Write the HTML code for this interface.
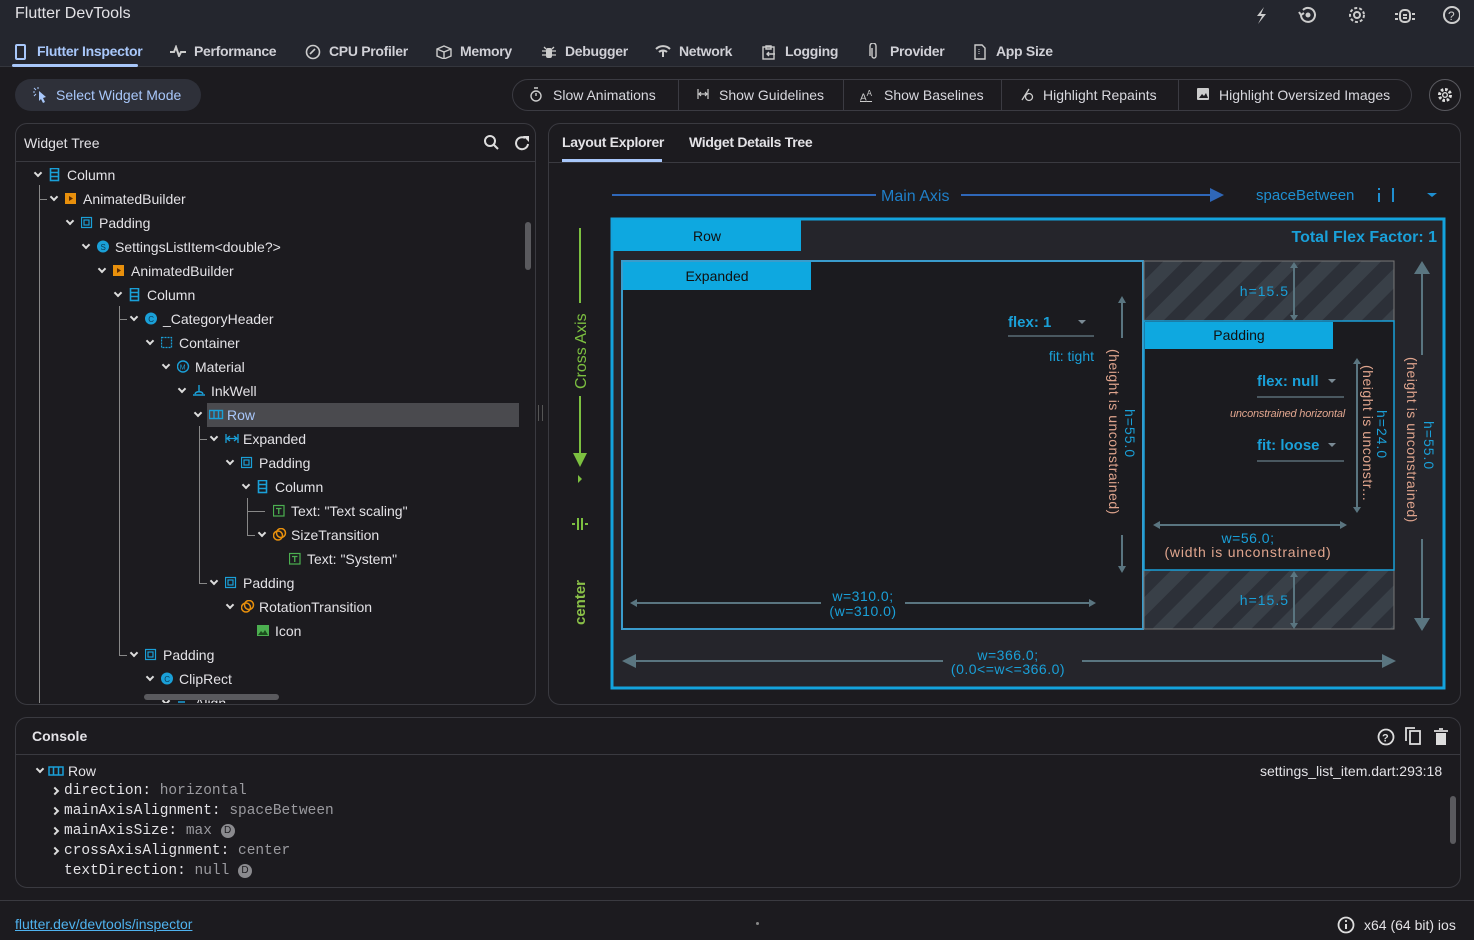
<!DOCTYPE html>
<html><head><meta charset="utf-8">
<style>
*{box-sizing:border-box;margin:0;padding:0}
body{width:1474px;height:940px;background:#1c1b1f;font-family:"Liberation Sans",sans-serif;color:#e3e2e6;position:relative;overflow:hidden;font-size:14px}
.a{position:absolute;white-space:nowrap}
.hdr{left:0;top:0;width:1474px;height:67px;background:#24262e;border-bottom:1px solid #34363d}
.tab{top:43px;font-size:14px;font-weight:bold;color:#d0d0d6;letter-spacing:-0.3px}
.btn{top:79px;height:32px;border:1px solid #3b3b42;border-radius:16px}
.tb{top:87px;font-size:14px;color:#d8d8de}
.panel{border:1px solid #3a3a40;border-radius:12px}
.tr{font-size:14px;color:#e3e2e6;height:24px;line-height:24px}
.chev{width:6px;height:6px;border-right:2px solid #ddd;border-bottom:2px solid #ddd;transform:rotate(45deg)}
.vl{width:1px;background:#888}
.mono{font-family:"Liberation Mono",monospace;font-size:14.5px;color:#e3e2e6}
.g{color:#9a9a9f}
.D{display:inline-block;width:14px;height:14px;border-radius:7px;background:#8a8a8e;color:#1c1b1f;font-size:10px;text-align:center;line-height:14px;font-family:"Liberation Sans",sans-serif;vertical-align:1px}
.rc{width:6px;height:6px;border-right:2px solid #ddd;border-bottom:2px solid #ddd;transform:rotate(-45deg)}
</style></head><body>
<div class="a hdr"></div>
<div class="a" style="left:15px;top:5px;font-size:16px;color:#e3e2e6">Flutter DevTools</div>
<svg class="a" style="left:1250px;top:4px" width="210" height="22" viewBox="0 0 210 22" fill="none" stroke="#ccc" stroke-width="2">
<path d="M14 3 L7 12 L12 12 L8 20 L16 10 L11 10 Z" fill="#ccc" stroke="none"/>
<path d="M53 6a7 7 0 1 1 -2 5" /><path d="M49 8l2 3 3-2" /><circle cx="58" cy="11" r="1.5" fill="#ccc"/>
<circle cx="107" cy="11" r="3"/><circle cx="107" cy="11" r="7" stroke-dasharray="3 2"/>
<rect x="150" y="6" width="10" height="12" rx="4"/><path d="M148 10h-3M162 10h3M148 15h-3M162 15h3M153 11h4M153 14h4"/>
<circle cx="202" cy="11" r="8"/><text x="198" y="16" font-size="12" fill="#ccc" stroke="none" font-family="Liberation Sans">?</text>
</svg>
<svg class="a" style="left:15px;top:44px" width="11" height="16"><rect x="1" y="1" width="9" height="14" rx="1" fill="none" stroke="#a8c7fa" stroke-width="2"/></svg>
<div class="a tab" style="left:37px;color:#a8c7fa">Flutter Inspector</div>
<div class="a" style="left:12px;top:64px;width:126px;height:3px;background:#a8c7fa;border-radius:2px"></div>
<svg class="a" style="left:170px;top:45px" width="16" height="12"><path d="M0 7h4l2-5 3 9 2-4h5" fill="none" stroke="#ccc" stroke-width="2"/></svg>
<div class="a tab" style="left:194px">Performance</div>
<svg class="a" style="left:305px;top:44px" width="16" height="16"><circle cx="8" cy="8" r="6.5" fill="none" stroke="#ccc" stroke-width="1.6"/><path d="M5 10l5-5" stroke="#ccc" stroke-width="1.6"/></svg>
<div class="a tab" style="left:329px">CPU Profiler</div>
<svg class="a" style="left:436px;top:45px" width="16" height="14"><path d="M1 4l7-3 7 3v7l-7 3-7-3z M1 4l7 3 7-3 M8 7v7" fill="none" stroke="#ccc" stroke-width="1.4"/></svg>
<div class="a tab" style="left:460px">Memory</div>
<svg class="a" style="left:542px;top:44px" width="14" height="16"><rect x="4" y="4" width="6" height="10" rx="2" fill="#ccc"/><path d="M0 7h14M0 11h14M2 3l2 2M12 3l-2 2" stroke="#ccc" stroke-width="1.3"/></svg>
<div class="a tab" style="left:565px">Debugger</div>
<svg class="a" style="left:655px;top:45px" width="16" height="12"><path d="M1 4a10 10 0 0 1 14 0M4 7a6 6 0 0 1 8 0M8 5v7" fill="none" stroke="#ccc" stroke-width="2"/></svg>
<div class="a tab" style="left:679px">Network</div>
<svg class="a" style="left:762px;top:44px" width="14" height="16"><rect x="1" y="3" width="11" height="12" fill="none" stroke="#ccc" stroke-width="1.4"/><path d="M4 2h5v3H4z M5 10h8M7 8l-2 2 2 2" fill="none" stroke="#ccc" stroke-width="1.4"/></svg>
<div class="a tab" style="left:785px">Logging</div>
<svg class="a" style="left:869px;top:43px" width="10" height="17"><path d="M3 5v8a2 2 0 0 0 4 0V3a3 3 0 0 0-6 0v10" fill="none" stroke="#ccc" stroke-width="1.4"/></svg>
<div class="a tab" style="left:890px">Provider</div>
<svg class="a" style="left:974px;top:44px" width="12" height="16"><path d="M1 1h7l3 3v11H1z" fill="none" stroke="#ccc" stroke-width="1.4"/><path d="M5 5v6" stroke="#ccc" stroke-dasharray="1 1"/></svg>
<div class="a tab" style="left:996px">App Size</div>

<div class="a" style="left:15px;top:79px;width:186px;height:32px;border-radius:16px;background:#2e3039"></div>
<svg class="a" style="left:33px;top:87px" width="14" height="16"><path d="M6 4l7 6-3 1 2 4-2 1-2-4-2 2z" fill="#a8c7fa"/><path d="M1 1l2 2M5 0v2M0 5h2M1 9l2-2" stroke="#a8c7fa"/></svg>
<div class="a" style="left:56px;top:87px;font-size:14px;color:#a8c7fa">Select Widget Mode</div>
<div class="a btn" style="left:512px;width:900px"></div>
<div class="a" style="left:678px;top:80px;width:1px;height:30px;background:#3b3b42"></div>
<div class="a" style="left:843px;top:80px;width:1px;height:30px;background:#3b3b42"></div>
<div class="a" style="left:1001px;top:80px;width:1px;height:30px;background:#3b3b42"></div>
<div class="a" style="left:1178px;top:80px;width:1px;height:30px;background:#3b3b42"></div>
<svg class="a" style="left:530px;top:87px" width="12" height="15"><circle cx="6" cy="9" r="5" fill="none" stroke="#ccc" stroke-width="1.4"/><path d="M4 1h4M6 6v3" stroke="#ccc" stroke-width="1.4"/></svg>
<div class="a tb" style="left:553px">Slow Animations</div>
<svg class="a" style="left:697px;top:89px" width="12" height="10"><path d="M1 0v10M11 0v10M2 5h8M4 3l-2 2 2 2M8 3l2 2-2 2" fill="none" stroke="#ccc" stroke-width="1.2"/></svg>
<div class="a tb" style="left:719px">Show Guidelines</div>
<div class="a" style="left:860px;top:89px;font-size:10px;color:#ccc;text-decoration:underline">A<sup style="font-size:8px">A</sup></div>
<div class="a tb" style="left:884px">Show Baselines</div>
<svg class="a" style="left:1020px;top:87px" width="14" height="15"><circle cx="9" cy="10" r="3.5" fill="none" stroke="#ccc" stroke-width="1.3"/><path d="M2 13l7-11" stroke="#ccc" stroke-width="1.3"/></svg>
<div class="a tb" style="left:1043px">Highlight Repaints</div>
<svg class="a" style="left:1197px;top:88px" width="12" height="12"><rect x="0" y="0" width="12" height="12" rx="1" fill="#ccc"/><path d="M2 10l3-4 2 2 2-3 2 5z" fill="#1c1b1f"/></svg>
<div class="a tb" style="left:1219px">Highlight Oversized Images</div>
<div class="a" style="left:1429px;top:79px;width:32px;height:32px;border:1px solid #5a5a60;border-radius:16px"></div>
<svg class="a" style="left:1436px;top:86px" width="18" height="18"><circle cx="9" cy="9" r="5.5" fill="none" stroke="#ddd" stroke-width="3" stroke-dasharray="2.6 1.7"/><circle cx="9" cy="9" r="2.3" fill="none" stroke="#ddd" stroke-width="1.4"/></svg>

<div class="a panel" style="left:15px;top:123px;width:521px;height:582px"></div>
<div class="a" style="left:24px;top:135px;font-size:14px">Widget Tree</div>
<svg class="a" style="left:483px;top:134px" width="48" height="18"><circle cx="7" cy="7" r="5" fill="none" stroke="#ddd" stroke-width="2"/><path d="M11 11l4 4" stroke="#ddd" stroke-width="2"/><path d="M42 4a6 6 0 1 0 3 6" fill="none" stroke="#ddd" stroke-width="2"/><path d="M40 2h6v6z" fill="#ddd"/></svg>
<div class="a" style="left:16px;top:161px;width:519px;height:1px;background:#3a3a40"></div>
<div class="a" style="left:207px;top:403px;width:312px;height:24px;background:#4a4a4e"></div>
<div class="a vl" style="left:39px;top:185px;height:518px"></div>
<div class="a" style="left:39px;top:199px;width:8px;height:1px;background:#888"></div>
<div class="a vl" style="left:119px;top:306px;height:350px"></div>
<div class="a" style="left:119px;top:319px;width:8px;height:1px;background:#888"></div>
<div class="a" style="left:119px;top:655px;width:8px;height:1px;background:#888"></div>
<div class="a vl" style="left:199px;top:426px;height:157px"></div>
<div class="a" style="left:199px;top:439px;width:8px;height:1px;background:#888"></div>
<div class="a" style="left:199px;top:583px;width:8px;height:1px;background:#888"></div>
<div class="a vl" style="left:247px;top:498px;height:38px"></div>
<div class="a" style="left:247px;top:511px;width:18px;height:1px;background:#888"></div>
<div class="a" style="left:247px;top:535px;width:8px;height:1px;background:#888"></div>
<div id="tree"></div>
<div class="a" style="left:525px;top:222px;width:6px;height:48px;background:#5a5a5e;border-radius:3px"></div>
<div class="a" style="left:144px;top:694px;width:135px;height:6px;background:#5a5a5e;border-radius:3px"></div>
<div class="a" style="left:538px;top:405px;width:5px;height:16px;border-left:1px solid #555;border-right:1px solid #555"></div>

<div class="a panel" style="left:548px;top:123px;width:913px;height:582px"></div>
<div class="a" style="left:562px;top:134px;font-size:14px;font-weight:bold;color:#e3e2e6;letter-spacing:-0.3px">Layout Explorer</div>
<div class="a" style="left:689px;top:134px;font-size:14px;font-weight:bold;color:#e3e2e6;letter-spacing:-0.3px">Widget Details Tree</div>
<div class="a" style="left:562px;top:159px;width:100px;height:3px;background:#a8c7fa"></div>
<div class="a" style="left:549px;top:162px;width:911px;height:1px;background:#3a3a40"></div>

<svg class="a" style="left:549px;top:163px" width="911" height="541" font-family="Liberation Sans">
<defs>
<pattern id="h" width="28" height="28" patternUnits="userSpaceOnUse" patternTransform="rotate(45)"><rect width="28" height="28" fill="#2c3038"/><rect width="14" height="28" fill="#394048"/></pattern>
</defs>
<line x1="63" y1="32" x2="327" y2="32" stroke="#2f67b8" stroke-width="2"/>
<text x="332" y="38" fill="#1f7fc8" font-size="16">Main Axis</text>
<line x1="412" y1="32" x2="662" y2="32" stroke="#2f67b8" stroke-width="2"/>
<path d="M661 25l14 7-14 7z" fill="#2f67b8"/>
<text x="707" y="37" fill="#1f8fd0" font-size="15">spaceBetween</text>
<path d="M830 25v2M830 30v9M844 25v14" stroke="#1f8fd0" stroke-width="2"/>
<path d="M878 30l5 4 5-4z" fill="#1f8fd0"/>
<line x1="31" y1="65" x2="31" y2="140" stroke="#7cc040" stroke-width="2"/>
<text transform="translate(37,226) rotate(-90)" fill="#7cc040" font-size="16">Cross Axis</text>
<line x1="31" y1="233" x2="31" y2="290" stroke="#7cc040" stroke-width="2"/>
<path d="M24 290l7 14 7-14z" fill="#7cc040"/>
<path d="M29 312l4 4-4 4z" fill="#7cc040"/>
<path d="M23 361h3M36 361h3M29 355v12M33 355v12" stroke="#7cc040" stroke-width="2"/>
<text transform="translate(36,462) rotate(-90)" fill="#8ac048" font-size="15" font-weight="bold">center</text>
<rect x="63" y="56" width="832" height="469" fill="#25252b" stroke="#13a3dd" stroke-width="3"/>
<rect x="64" y="57" width="188" height="31" fill="#0ea8e0"/>
<text x="158" y="78" fill="#111" font-size="14" text-anchor="middle">Row</text>
<text x="888" y="79" fill="#1aa0d8" font-size="16" font-weight="bold" text-anchor="end">Total Flex Factor: 1</text>
<rect x="73" y="98" width="521" height="368" fill="#1b1b1f" stroke="#3a9ccc" stroke-width="2"/>
<rect x="74" y="99" width="188" height="28" fill="#0ea8e0"/>
<text x="168" y="118" fill="#111" font-size="14" text-anchor="middle">Expanded</text>
<text x="459" y="164" fill="#1aa0d8" font-size="15" font-weight="bold">flex: 1</text>
<path d="M529 157l4 4 4-4z" fill="#7a8a94"/>
<line x1="459" y1="173" x2="545" y2="173" stroke="#4a5860" stroke-width="2"/>
<text x="545" y="198" fill="#1aa0d8" font-size="14" text-anchor="end">fit: tight</text>
<line x1="573" y1="138" x2="573" y2="175" stroke="#5a7580" stroke-width="2"/>
<path d="M569 140l4-7 4 7z" fill="#5a7580"/>
<text transform="translate(560,186) rotate(90)" fill="#e0a58e" font-size="14" letter-spacing="0.5">(height is unconstrained)</text>
<text transform="translate(576,246) rotate(90)" fill="#1aa0d8" font-size="14" letter-spacing="1">h=55.0</text>
<line x1="573" y1="372" x2="573" y2="405" stroke="#5a7580" stroke-width="2"/>
<path d="M569 403l4 7 4-7z" fill="#5a7580"/>
<line x1="86" y1="440" x2="272" y2="440" stroke="#5a7580" stroke-width="2"/>
<path d="M88 436l-7 4 7 4z M540 436l7 4-7 4z" fill="#5a7580"/>
<line x1="356" y1="440" x2="542" y2="440" stroke="#5a7580" stroke-width="2"/>
<text x="314" y="438" fill="#1aa0d8" font-size="14" text-anchor="middle" letter-spacing="0.5">w=310.0;</text>
<text x="314" y="453" fill="#1aa0d8" font-size="14" text-anchor="middle" letter-spacing="0.5">(w=310.0)</text>
<rect x="595" y="98" width="250" height="368" fill="url(#h)" stroke="#777" stroke-width="1"/>
<rect x="595" y="158" width="250" height="249" fill="#1b1b1f" stroke="#1aa0d8" stroke-width="1.5"/>
<rect x="596" y="159" width="188" height="27" fill="#0ea8e0"/>
<text x="690" y="177" fill="#111" font-size="14" text-anchor="middle">Padding</text>
<line x1="745" y1="102" x2="745" y2="155" stroke="#5a7580" stroke-width="2"/>
<path d="M741 105l4-6 4 6z M741 152l4 6 4-6z" fill="#5a7580"/>
<text x="740" y="133" fill="#1aa0d8" font-size="14" text-anchor="end" letter-spacing="1">h=15.5</text>
<line x1="745" y1="411" x2="745" y2="463" stroke="#5a7580" stroke-width="2"/>
<path d="M741 414l4-6 4 6z M741 460l4 6 4-6z" fill="#5a7580"/>
<text x="740" y="442" fill="#1aa0d8" font-size="14" text-anchor="end" letter-spacing="1">h=15.5</text>
<text x="708" y="223" fill="#1aa0d8" font-size="15" font-weight="bold">flex: null</text>
<path d="M779 216l4 4 4-4z" fill="#7a8a94"/>
<line x1="708" y1="234" x2="795" y2="234" stroke="#4a5860" stroke-width="2"/>
<text x="796" y="254" fill="#e0a58e" font-size="11" font-style="italic" text-anchor="end" letter-spacing="-0.2">unconstrained horizontal</text>
<text x="708" y="287" fill="#1aa0d8" font-size="15" font-weight="bold">fit: loose</text>
<path d="M779 280l4 4 4-4z" fill="#7a8a94"/>
<line x1="708" y1="298" x2="795" y2="298" stroke="#4a5860" stroke-width="2"/>
<line x1="808" y1="200" x2="808" y2="345" stroke="#5a7580" stroke-width="2"/>
<path d="M804 201l4-6 4 6z M804 344l4 6 4-6z" fill="#5a7580"/>
<text transform="translate(814,202) rotate(90)" fill="#e0a58e" font-size="14" letter-spacing="0.5">(height is unconstr...</text>
<text transform="translate(828,247) rotate(90)" fill="#1aa0d8" font-size="14" letter-spacing="1">h=24.0</text>
<line x1="610" y1="362" x2="792" y2="362" stroke="#5a7580" stroke-width="2"/>
<path d="M611 358l-7 4 7 4z M791 358l7 4-7 4z" fill="#5a7580"/>
<text x="699" y="380" fill="#1aa0d8" font-size="14" text-anchor="middle" letter-spacing="0.5">w=56.0;</text>
<text x="699" y="394" fill="#e0a58e" font-size="14" text-anchor="middle" letter-spacing="0.8">(width is unconstrained)</text>
<line x1="873" y1="105" x2="873" y2="192" stroke="#5a7580" stroke-width="2"/>
<path d="M865 111l8-13 8 13z M865 455l8 13 8-13z" fill="#5a7580"/>
<text transform="translate(858,194) rotate(90)" fill="#e0a58e" font-size="14" letter-spacing="0.5">(height is unconstrained)</text>
<text transform="translate(875,258) rotate(90)" fill="#1aa0d8" font-size="14" letter-spacing="1">h=55.0</text>
<line x1="873" y1="376" x2="873" y2="456" stroke="#5a7580" stroke-width="2"/>
<line x1="85" y1="498" x2="394" y2="498" stroke="#5a7580" stroke-width="2"/>
<line x1="533" y1="498" x2="836" y2="498" stroke="#5a7580" stroke-width="2"/>
<path d="M87 491l-14 7 14 7z M833 491l14 7-14 7z" fill="#5a7580"/>
<text x="459" y="497" fill="#1aa0d8" font-size="14" text-anchor="middle" letter-spacing="0.5">w=366.0;</text>
<text x="459" y="511" fill="#1aa0d8" font-size="14" text-anchor="middle" letter-spacing="0.5">(0.0&lt;=w&lt;=366.0)</text>
</svg>

<div class="a panel" style="left:15px;top:717px;width:1446px;height:171px"></div>
<div class="a" style="left:32px;top:728px;font-size:14px;font-weight:bold">Console</div>
<div class="a" style="left:16px;top:754px;width:1444px;height:1px;background:#3a3a40"></div>
<svg class="a" style="left:1377px;top:727px" width="74" height="20"><circle cx="9" cy="10" r="7.5" fill="none" stroke="#ddd" stroke-width="1.8"/><text x="5" y="14.5" font-size="11" font-weight="bold" fill="#ddd" font-family="Liberation Sans">?</text><rect x="33" y="4" width="10" height="13" fill="none" stroke="#ddd" stroke-width="1.8"/><path d="M29 14V1h9" fill="none" stroke="#ddd" stroke-width="1.8"/><path d="M59 6h10v12H59z" fill="#ddd"/><path d="M57 4h14M62 2h4" stroke="#ddd" stroke-width="1.8"/></svg>
<div class="a chev" style="left:37px;top:766px"></div>
<svg class="a" style="left:48px;top:766px" width="16" height="10"><rect x="1" y="1" width="14" height="8" fill="none" stroke="#1aa0d8" stroke-width="1.5"/><path d="M5.5 1v8M10.5 1v8" stroke="#1aa0d8" stroke-width="1.5"/></svg>
<div class="a" style="left:68px;top:763px;font-size:14px">Row</div>
<div class="a" style="left:1260px;top:763px;font-size:14px">settings_list_item.dart:293:18</div>
<div class="a rc" style="left:52px;top:788px"></div>
<div class="a mono" style="left:64px;top:783px">direction: <span class="g">horizontal</span></div>
<div class="a rc" style="left:52px;top:808px"></div>
<div class="a mono" style="left:64px;top:803px">mainAxisAlignment: <span class="g">spaceBetween</span></div>
<div class="a rc" style="left:52px;top:828px"></div>
<div class="a mono" style="left:64px;top:823px">mainAxisSize: <span class="g">max</span> <span class="D">D</span></div>
<div class="a rc" style="left:52px;top:848px"></div>
<div class="a mono" style="left:64px;top:843px">crossAxisAlignment: <span class="g">center</span></div>
<div class="a mono" style="left:64px;top:863px">textDirection: <span class="g">null</span> <span class="D">D</span></div>
<div class="a" style="left:1450px;top:796px;width:6px;height:48px;background:#5a5a5e;border-radius:3px"></div>

<div class="a" style="left:0;top:900px;width:1474px;height:1px;background:#3a3a40"></div>
<div class="a" style="left:15px;top:916px;font-size:14px;color:#4fb3ef;text-decoration:underline">flutter.dev/devtools/inspector</div>
<div class="a" style="left:756px;top:922px;width:3px;height:3px;background:#888;border-radius:2px"></div>
<svg class="a" style="left:1337px;top:916px" width="18" height="18"><circle cx="9" cy="9" r="7.5" fill="none" stroke="#ddd" stroke-width="1.8"/><path d="M9 8v5" stroke="#ddd" stroke-width="2"/><circle cx="9" cy="5" r="1.1" fill="#ddd"/></svg>
<div class="a" style="left:1364px;top:917px;font-size:14px">x64 (64 bit) ios</div>

<script>
var rows=[
[0,1,'col','Column'],[1,1,'ab','AnimatedBuilder'],[2,1,'pad','Padding'],[3,1,'s','SettingsListItem<double?>'],
[4,1,'ab','AnimatedBuilder'],[5,1,'col','Column'],[6,1,'c','_CategoryHeader'],[7,1,'cont','Container'],
[8,1,'m','Material'],[9,1,'ink','InkWell'],[10,1,'row','Row'],[11,1,'exp','Expanded'],[12,1,'pad','Padding'],
[13,1,'col','Column'],[14,0,'t','Text: "Text scaling"'],[14,1,'tr','SizeTransition'],[15,0,'t','Text: "System"'],
[11,1,'pad','Padding'],[12,1,'tr','RotationTransition'],[13,0,'img','Icon'],[6,1,'pad','Padding'],[7,1,'c','ClipRect'],[8,1,'al','Align']];
var icons={
col:'<rect x="1.5" y="0.5" width="8" height="12" fill="none" stroke="#1aa0d8" stroke-width="1.6"/><path d="M1.5 4.5h8M1.5 8.5h8" stroke="#1aa0d8" stroke-width="1.6"/>',
ab:'<rect x="0" y="1" width="11" height="11" fill="#e8900c"/><path d="M4 4l4 2.5-4 2.5z" fill="#5a2a00"/>',
pad:'<rect x="0.5" y="1.5" width="10" height="10" fill="none" stroke="#1aa0d8" stroke-width="1.2"/><rect x="3" y="4" width="5" height="5" fill="none" stroke="#1aa0d8" stroke-width="1.2"/>',
s:'<circle cx="6" cy="6.5" r="6" fill="#1aa0d8"/><text x="3.5" y="10" font-size="8" fill="#0a3a55" font-family="Liberation Sans">S</text>',
c:'<circle cx="6" cy="6.5" r="6" fill="#1aa0d8"/><text x="3.2" y="10" font-size="8" fill="#0a3a55" font-family="Liberation Sans">C</text>',
m:'<circle cx="6" cy="6.5" r="5.5" fill="none" stroke="#1aa0d8" stroke-width="1.4"/><text x="2.8" y="9.5" font-size="7" fill="#1aa0d8" font-family="Liberation Sans">M</text>',
cont:'<rect x="0.5" y="1.5" width="10" height="10" fill="none" stroke="#1aa0d8" stroke-width="1.3" stroke-dasharray="2 1"/>',
ink:'<path d="M0 11h12M2 10c1-3 7-3 8 0M6 1v6" stroke="#1aa0d8" stroke-width="1.4" fill="none"/>',
row:'<rect x="0.5" y="2.5" width="13" height="8" fill="none" stroke="#1aa0d8" stroke-width="1.4"/><path d="M5 2.5v8M9.5 2.5v8" stroke="#1aa0d8" stroke-width="1.4"/>',
exp:'<path d="M1 2v9M13 2v9M2 6.5h10M5 4l-3 2.5 3 2.5M9 4l3 2.5-3 2.5" stroke="#1aa0d8" stroke-width="1.3" fill="none"/>',
t:'<rect x="0.5" y="1.5" width="10.5" height="10.5" fill="none" stroke="#4caf50" stroke-width="1.2"/><path d="M3 4.5h5.5M5.75 4.5v5.5" stroke="#4caf50" stroke-width="1.3"/>',
tr:'<circle cx="5" cy="7.5" r="4.5" fill="none" stroke="#e8900c" stroke-width="1.5"/><circle cx="8" cy="5" r="4.5" fill="none" stroke="#e8900c" stroke-width="1.5"/>',
img:'<rect x="0" y="1" width="12" height="11" fill="#4caf50"/><path d="M1 11l3-4 2 2 2-3 3 5z" fill="#1b4d1d"/>',
al:'<path d="M1 3h10M1 6h7M1 9h10" stroke="#1aa0d8" stroke-width="1.4"/>'};
var h='';
rows.forEach(function(r,i){
 var y=175+i*24, cx=38+16*r[0], ix=cx+11, tx=ix+18;
 if(r[1]) h+='<div class="a chev" style="left:'+(cx-3)+'px;top:'+(y-5)+'px"></div>';
 h+='<svg class="a" style="left:'+ix+'px;top:'+(y-7)+'px" width="15" height="14">'+icons[r[2]]+'</svg>';
 var col=(r[2]=='row')?'#a8c7fa':'#e3e2e6';
 h+='<div class="a tr" style="left:'+tx+'px;top:'+(y-12)+'px;color:'+col+'">'+r[3].replace(/</g,'&lt;')+'</div>';
});
document.getElementById('tree').innerHTML=h;
</script>
<style>#tree{position:absolute;left:0;top:0;width:535px;height:703px;overflow:hidden;clip-path:inset(162px 0 0 0)}</style>
</body></html>
